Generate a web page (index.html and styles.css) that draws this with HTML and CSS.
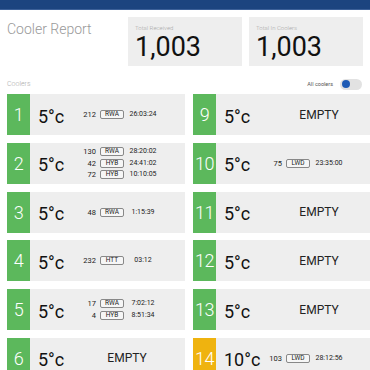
FILE: index.html
```html
<!DOCTYPE html>
<html lang="en">
<head>
    <meta charset="UTF-8">
    <meta name="viewport" content="width=device-width, initial-scale=1.0">
    <title>Cooler Report</title>
    <link rel="stylesheet" href="styles.css">
</head>
<body>
    <div class="topbar"></div>

    <!-- Title and totals -->
    <div class="head">
        <h1 class="title">Cooler Report</h1>
        <div class="total-card">
            <div class="total-label">Total Received</div>
            <div class="total-value">1,003</div>
        </div>
        <div class="total-card">
            <div class="total-label">Total In Coolers</div>
            <div class="total-value">1,003</div>
        </div>
    </div>

    <div class="section-bar">
        <span class="section-label">Coolers</span>
        <label class="switch-wrap">
            <span class="switch-label">All coolers</span>
            <span class="switch"><span class="knob"></span></span>
        </label>
    </div>

    <!-- Cooler list -->
    <div class="coolers">
        <div class="cooler-col">
            <div class="cooler">
                <div class="num">1</div>
                <div class="temp">5°c</div>
                <div class="details">
                    <div class="entries">
                        <span class="count">212</span><span class="badge">RWA</span><span class="time">26:03:24</span>
                    </div>
                </div>
            </div>
            <div class="cooler">
                <div class="num">2</div>
                <div class="temp">5°c</div>
                <div class="details">
                    <div class="entries">
                        <span class="count">130</span><span class="badge">RWA</span><span class="time">28:20:02</span>
                        <span class="count">42</span><span class="badge">HYB</span><span class="time">24:41:02</span>
                        <span class="count">72</span><span class="badge">HYB</span><span class="time">10:10:05</span>
                    </div>
                </div>
            </div>
            <div class="cooler">
                <div class="num">3</div>
                <div class="temp">5°c</div>
                <div class="details">
                    <div class="entries">
                        <span class="count">48</span><span class="badge">RWA</span><span class="time">1:15:39</span>
                    </div>
                </div>
            </div>
            <div class="cooler">
                <div class="num">4</div>
                <div class="temp">5°c</div>
                <div class="details">
                    <div class="entries">
                        <span class="count">232</span><span class="badge">HTT</span><span class="time">03:12</span>
                    </div>
                </div>
            </div>
            <div class="cooler">
                <div class="num">5</div>
                <div class="temp">5°c</div>
                <div class="details">
                    <div class="entries">
                        <span class="count">17</span><span class="badge">RWA</span><span class="time">7:02:12</span>
                        <span class="count">4</span><span class="badge">HYB</span><span class="time">8:51:34</span>
                    </div>
                </div>
            </div>
            <div class="cooler">
                <div class="num">6</div>
                <div class="temp">5°c</div>
                <div class="details"><span class="empty">EMPTY</span></div>
            </div>
        </div>

        <div class="cooler-col col-right">
            <div class="cooler">
                <div class="num">9</div>
                <div class="temp">5°c</div>
                <div class="details"><span class="empty">EMPTY</span></div>
            </div>
            <div class="cooler">
                <div class="num">10</div>
                <div class="temp">5°c</div>
                <div class="details">
                    <div class="entries">
                        <span class="count">75</span><span class="badge">LWD</span><span class="time">23:35:00</span>
                    </div>
                </div>
            </div>
            <div class="cooler">
                <div class="num">11</div>
                <div class="temp">5°c</div>
                <div class="details"><span class="empty">EMPTY</span></div>
            </div>
            <div class="cooler">
                <div class="num">12</div>
                <div class="temp">5°c</div>
                <div class="details"><span class="empty">EMPTY</span></div>
            </div>
            <div class="cooler">
                <div class="num">13</div>
                <div class="temp">5°c</div>
                <div class="details"><span class="empty">EMPTY</span></div>
            </div>
            <div class="cooler warn">
                <div class="num">14</div>
                <div class="temp">10°c</div>
                <div class="details">
                    <div class="entries">
                        <span class="count">103</span><span class="badge">LWD</span><span class="time">28:12:56</span>
                    </div>
                </div>
            </div>
        </div>
    </div>
</body>
</html>
```

FILE: styles.css
```css
body {
    margin: 0;
    padding: 0;
    font-family: Roboto, "Liberation Sans", sans-serif;
    background: #fff;
    color: #111;
    overflow: hidden;
}

/* Top Bar */
.topbar {
    height: 9px;
    background: #1c447f;
    border-bottom: 1px solid #3c6098;
}

/* Title and Totals */
.head {
    display: flex;
    gap: 7px;
    padding: 7px 7px 0 7px;
}

.title {
    flex: 1;
    margin: 0;
    font-size: 14px;
    font-weight: 300;
    color: #999;
    line-height: 24px;
}

.total-card {
    width: 114px;
    height: 49px;
    background: #eee;
    padding: 8px 7px 0 7px;
    box-sizing: border-box;
}

.total-label {
    font-size: 6px;
    line-height: 6px;
    color: #aaa;
    font-weight: 300;
}

.total-value {
    font-size: 27px;
    line-height: 32px;
    color: #111;
}

/* Section Bar */
.section-bar {
    display: flex;
    justify-content: space-between;
    align-items: center;
    height: 14px;
    margin: 11px 8px 3px 7px;
}

.section-label {
    font-size: 7px;
    color: #aaa;
    font-weight: 300;
}

.switch-wrap {
    display: flex;
    align-items: center;
    gap: 7px;
}

.switch-label {
    font-size: 5.5px;
    color: #555;
}

.switch {
    width: 22px;
    height: 11px;
    border-radius: 6px;
    background: #e2e2e2;
    display: flex;
    align-items: center;
    padding-left: 2px;
    box-sizing: border-box;
}

.knob {
    width: 8px;
    height: 8px;
    border-radius: 50%;
    background: #1f5bb5;
}

/* Cooler List */
.coolers {
    display: grid;
    grid-template-columns: 1fr 1fr;
    gap: 8px;
    padding: 0 8px 0 7px;
}

.cooler-col {
    display: flex;
    flex-direction: column;
    gap: 7.8px;
}

.cooler {
    display: flex;
    align-items: center;
    height: 41px;
    background: #eee;
    padding-right: 9px;
}

.num {
    width: 23px;
    height: 100%;
    background: #5cb85c;
    color: #fff;
    font-size: 18px;
    font-weight: 300;
    display: flex;
    align-items: center;
    justify-content: center;
    letter-spacing: -0.5px;
}

.warn .num {
    background: #efb30f;
}

.temp {
    width: 40px;
    padding-left: 8px;
    font-size: 18px;
    padding-top: 3px;
}

.details {
    flex: 1;
    display: flex;
    justify-content: center;
    align-items: center;
}

.empty {
    font-size: 12px;
    color: #222;
}

.entries {
    display: grid;
    grid-template-columns: 18px 24px 30px;
    column-gap: 4px;
    row-gap: 2.5px;
    align-items: center;
    margin-right: 18px;
    font-size: 7px;
    color: #222;
}

.col-right .entries {
    margin-right: 30px;
}

.count {
    text-align: right;
    font-size: 7.5px;
}

.badge {
    border: 1px solid #888;
    border-radius: 2px;
    text-align: center;
    line-height: 7px;
    font-size: 6.5px;
    background: #f6f6f6;
}

.time {
    text-align: center;
    line-height: 9px;
}
```
